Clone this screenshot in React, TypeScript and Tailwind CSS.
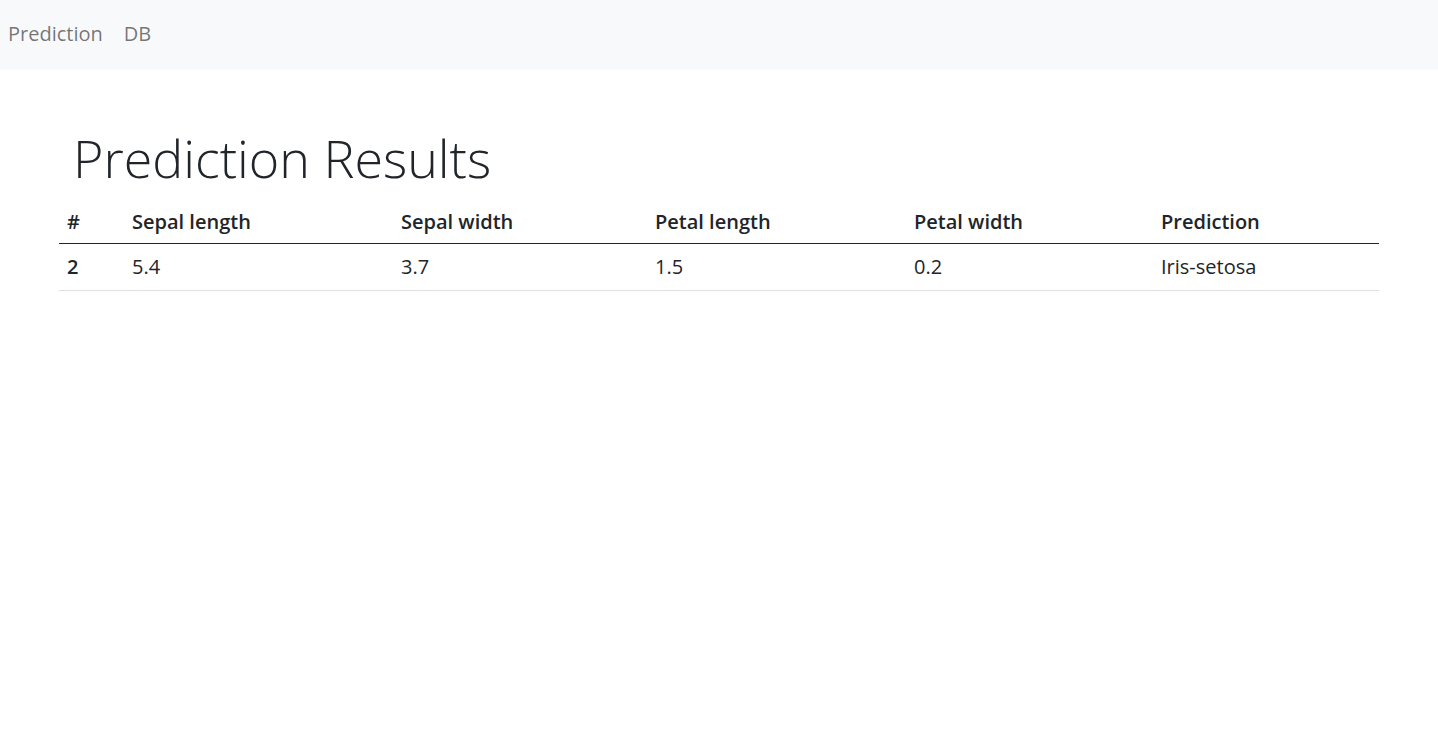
import React from 'react';

const headers = ['#', 'Sepal length', 'Sepal width', 'Petal length', 'Petal width', 'Prediction'];
const widths = ['w-[65px]', 'w-[269px]', 'w-[254px]', 'w-[259px]', 'w-[247px]', 'w-[226px]'];

const rows = [{ id: 2, sl: '5.4', sw: '3.7', pl: '1.5', pw: '0.2', pred: 'Iris-setosa' }];

const App: React.FC = () => {
  return (
    <div className="min-h-screen bg-white text-[#212529] text-[20px] leading-[1.5]" style={{ fontFamily: '"Open Sans", "Noto Sans", sans-serif' }}>
      {/* Navbar */}
      <nav className="h-[70px] bg-[#f8f9fa] flex items-center px-2 pb-[3px]">
        <a className="text-black/55 mr-[21px]">Prediction</a>
        <a className="text-black/55">DB</a>
      </nav>

      {/* Content */}
      <main className="w-[1320px] mx-auto">
        <h1 className="text-[52px] font-light leading-[1.2] pl-[14px] pt-[57px] pb-[12px]">Prediction Results</h1>
        <table className="w-full border-collapse table-fixed">
          <thead>
            <tr className="border-b border-[#212529]">
              {headers.map((h, i) => (
                <th key={h} className={`${widths[i]} text-left font-semibold px-2 py-[6px]`}>{h}</th>
              ))}
            </tr>
          </thead>
          <tbody>
            {rows.map(r => (
              <tr key={r.id} className="border-b border-[#dee2e6]">
                <td className="px-2 py-2 font-semibold">{r.id}</td>
                <td className="px-2 py-2">{r.sl}</td>
                <td className="px-2 py-2">{r.sw}</td>
                <td className="px-2 py-2">{r.pl}</td>
                <td className="px-2 py-2">{r.pw}</td>
                <td className="px-2 py-2">{r.pred}</td>
              </tr>
            ))}
          </tbody>
        </table>
      </main>
    </div>
  );
};

export default App;
